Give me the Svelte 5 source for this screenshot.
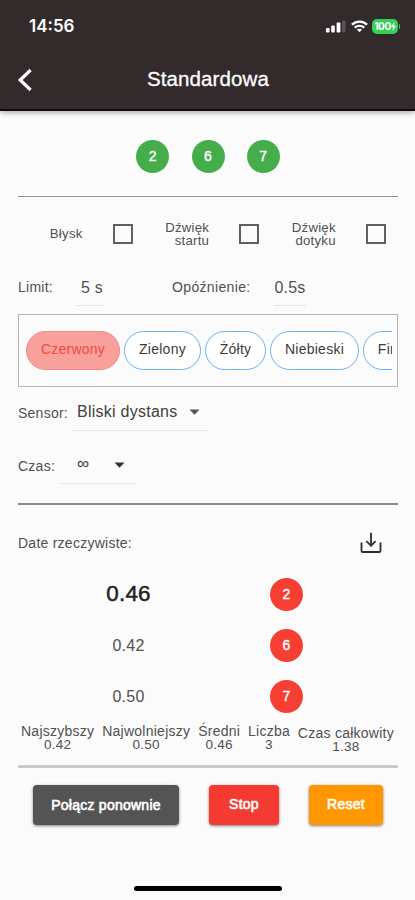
<script>
	let selected = 'Czerwony';

	let flags = [
		{ label: 'Błysk', checked: false },
		{ label: 'Dźwięk startu', checked: false },
		{ label: 'Dźwięk dotyku', checked: false }
	];

	const devices = [2, 6, 7];

	const colors = [
		{ name: 'Czerwony', width: 94 },
		{ name: 'Zielony', width: 77 },
		{ name: 'Żółty', width: 61 },
		{ name: 'Niebieski', width: 89 },
		{ name: 'Firoletowy', width: 96 }
	];

	const results = [
		{ time: '0.46', device: 2 },
		{ time: '0.42', device: 6 },
		{ time: '0.50', device: 7 }
	];

	const stats = [
		{ label: 'Najszybszy', value: '0.42' },
		{ label: 'Najwolniejszy', value: '0.50' },
		{ label: 'Średni', value: '0.46' },
		{ label: 'Liczba', value: '3' },
		{ label: 'Czas całkowity', value: '1.38' }
	];
</script>

<div class="screen">
	<header>
		<div class="status">
			<span class="clock">14:56</span>
			<div class="status-icons">
				<svg class="signal" width="20" height="13" viewBox="0 0 20 13">
					<rect x="0" y="8" width="3.6" height="4.5" rx="1" fill="#fff" />
					<rect x="5.2" y="5.5" width="3.6" height="7" rx="1" fill="#fff" />
					<rect x="10.6" y="2.5" width="3.8" height="10" rx="1" fill="#fff" />
					<rect x="16.2" y="0.5" width="3.2" height="12" rx="1" fill="#5d5657" />
				</svg>
				<svg class="wifi" width="17" height="13" viewBox="0 0 18 13">
					<g fill="none" stroke="#fff" stroke-width="2.5">
						<path d="M1 4.6C5.6.3 12.4.3 17 4.6" />
						<path d="M3.9 7.8C6.9 5.1 11.1 5.1 14.1 7.8" />
					</g>
					<path d="M6.2 9.8C7.8 8.4 10.2 8.4 11.8 9.8L9 12.6z" fill="#fff" />
				</svg>
				<div class="battery">
					<span>100</span>
					<svg width="5" height="9" viewBox="0 0 5 9"><path d="M3.4 0L0 5h2L1.6 9 5 3.8H3z" fill="#fff" /></svg>
				</div>
				<i class="battery-tip"></i>
			</div>
		</div>
		<div class="title-bar">
			<button class="back" aria-label="Wstecz">
				<svg width="16" height="24" viewBox="0 0 16 24">
					<path d="M13.6 2L3.2 12l10.4 10" fill="none" stroke="#fff" stroke-width="3.2" />
				</svg>
			</button>
			<h1>Standardowa</h1>
		</div>
	</header>

	<main>
		<div class="devices">
			{#each devices as device}
				<span class="dot green">{device}</span>
			{/each}
		</div>

		<div class="flags">
			{#each flags as flag}
				<label>
					<span>{flag.label}</span>
					<input type="checkbox" bind:checked={flag.checked} />
				</label>
			{/each}
		</div>

		<div class="numbers">
			<span class="name limit">Limit:</span>
			<span class="field five">5 s</span>
			<span class="name delay">Opóźnienie:</span>
			<span class="field half">0.5s</span>
		</div>

		<div class="colors">
			<div class="scroller">
				{#each colors as color}
					<button
						class="chip"
						class:active={selected === color.name}
						style="width: {color.width}px"
						on:click={() => (selected = color.name)}
					>
						{color.name}
					</button>
				{/each}
			</div>
		</div>

		<div class="row">
			<span class="name">Sensor:</span>
			<div class="select sensor">
				<span>Bliski dystans</span>
				<svg width="11" height="6" viewBox="0 0 10 6"><path d="M0 .5h10L5 5.8z" fill="#555" /></svg>
			</div>
		</div>
		<div class="row time">
			<span class="name">Czas:</span>
			<div class="select duration">
				<span>∞</span>
				<svg width="11" height="6" viewBox="0 0 10 6"><path d="M0 .5h10L5 5.8z" fill="#333" /></svg>
			</div>
		</div>

		<div class="live">
			<span class="name">Date rzeczywiste:</span>
			<svg width="22" height="22" viewBox="0 0 22 22" fill="none" stroke="#2c2c2c" stroke-width="1.8">
				<path d="M1.5 10.5v8.2q0 1.3 1.3 1.3h16.4q1.3 0 1.3-1.3v-8.2" />
				<path d="M11 .8v12.4" />
				<path d="M6.4 9.2l4.6 4.6 4.6-4.6" />
			</svg>
		</div>

		<div class="results">
			{#each results as result, i}
				<div class="result" class:latest={i === 0}>
					<span class="value">{result.time}</span>
					<span class="dot red">{result.device}</span>
				</div>
			{/each}
		</div>

		<div class="stats">
			{#each stats as stat}
				<div class="stat">
					<span>{stat.label}</span>
					<span>{stat.value}</span>
				</div>
			{/each}
		</div>

		<div class="actions">
			<button class="btn reconnect">Połącz ponownie</button>
			<button class="btn stop">Stop</button>
			<button class="btn reset">Reset</button>
		</div>
	</main>

	<footer><i class="home"></i></footer>
</div>

<style>
	:global(body) {
		background: #fbfbfb;
	}
	.screen {
		display: flex;
		flex-direction: column;
		width: 415px;
		height: 900px;
		overflow: hidden;
		background: #fbfbfb;
		color: #505050;
		font-family: 'Liberation Sans', Arial, sans-serif;
		font-size: 14px;
		letter-spacing: 0.25px;
	}
	.screen * {
		box-sizing: border-box;
	}
	button {
		margin: 0;
		padding: 0;
		border: 0;
		font: inherit;
		letter-spacing: inherit;
		white-space: nowrap;
	}
	svg {
		display: block;
		flex: none;
	}

	/* header */
	header {
		flex: none;
		height: 111px;
		background: #322a2b;
		border-bottom: 2px solid #120c0d;
		box-shadow: 0 1px 6px rgba(0, 0, 0, 0.4);
		color: #fff;
	}
	.status {
		display: flex;
		justify-content: space-between;
		align-items: center;
		height: 52px;
		padding: 0 15px 0 29px;
	}
	.clock {
		font-family: Inter, sans-serif;
		font-size: 17px;
		font-weight: 600;
		letter-spacing: 0;
	}
	.status-icons {
		display: flex;
		align-items: center;
	}
	.wifi {
		margin: 0 4px 0 5px;
	}
	.battery {
		display: flex;
		align-items: center;
		justify-content: center;
		width: 26px;
		height: 15px;
		border-radius: 5px;
		background: #34d058;
		font: 700 10px Inter, sans-serif;
		letter-spacing: -0.4px;
	}
	.battery-tip {
		width: 1.5px;
		height: 5px;
		margin-left: 0.5px;
		border-radius: 0 2px 2px 0;
		background: #34d058;
	}
	.title-bar {
		display: grid;
		grid-template-columns: 32px 1fr 32px;
		align-items: center;
		height: 56px;
	}
	.back {
		padding-left: 17px;
		background: none;
	}
	h1 {
		margin: 0;
		padding: 0 0 3px 1px;
		font-size: 20.5px;
		font-weight: 400;
		letter-spacing: 0.1px;
		text-align: center;
		-webkit-text-stroke: 0.3px #fff;
	}

	main {
		display: flex;
		flex-direction: column;
		flex: 1;
		padding: 0 17px 0 18px;
	}
	.dot {
		width: 33px;
		height: 33px;
		border-radius: 50%;
		color: #fff;
		font-size: 14px;
		line-height: 32px;
		text-align: center;
		-webkit-text-stroke: 0.4px #fff;
	}
	.green {
		background: #45ae4b;
	}
	.red {
		background: #f63e32;
	}
	.devices {
		display: flex;
		justify-content: center;
		gap: 22.3px;
		height: 86px;
		padding-top: 29px;
		border-bottom: 1.4px solid #949494;
	}

	/* options */
	.flags {
		display: grid;
		grid-template-columns: repeat(3, 126.6px);
		height: 75px;
		padding-bottom: 2px;
	}
	.flags label {
		display: flex;
		align-items: center;
		justify-content: flex-end;
		gap: 30px;
		padding-right: 12px;
		line-height: 13px;
		text-align: right;
	}
	.flags span {
		width: 50px;
		font-size: 13.2px;
	}
	.flags input {
		appearance: none;
		width: 20px;
		height: 20px;
		margin: 0;
		border: 2px solid #606060;
	}
	.numbers {
		display: flex;
		height: 42px;
		padding-top: 6px;
	}
	.name {
		line-height: 18px;
	}
	.limit {
		width: 58px;
	}
	.field {
		height: 28px;
		border-bottom: 1px solid #e4e4e4;
		font-size: 16px;
		line-height: 19px;
		text-align: center;
	}
	.five {
		width: 28px;
		margin-right: 68px;
		padding-left: 4px;
		white-space: nowrap;
	}
	.delay {
		width: 102px;
		letter-spacing: 0.35px;
	}
	.half {
		width: 32px;
	}
	.colors {
		flex: none;
		height: 73px;
		padding: 16px 5px 0 7px;
		border: 1px solid #b2b2b2;
	}
	.scroller {
		display: flex;
		gap: 4px;
		overflow: hidden;
	}
	.chip {
		flex: none;
		height: 39px;
		padding-bottom: 3px;
		border: 1.8px solid #6fb1f2;
		border-radius: 20px;
		background: #fff;
		color: #3c3c3c;
		line-height: 34px;
	}
	.chip.active {
		border-color: #f08a86;
		background: #f8a09b;
		color: #f34a40;
	}
	.row {
		display: flex;
		padding-top: 16px;
		height: 54px;
	}
	.row .name {
		line-height: 20px;
	}
	.select {
		display: flex;
		align-items: center;
		height: 28px;
		padding-bottom: 9px;
		border-bottom: 1px solid #e8e8e8;
		font-size: 16px;
		color: #404040;
	}
	.sensor {
		width: 136px;
		margin-left: 4px;
		padding-left: 5px;
		gap: 12px;
	}
	.duration {
		width: 75px;
		margin-left: 5px;
		padding-left: 17px;
		gap: 25px;
	}
	.time {
		height: 64px;
		padding-top: 15px;
		border-bottom: 2px solid #8c8c8c;
	}
	.duration span {
		padding-bottom: 2px;
		font-size: 17px;
	}

	/* live data */
	.live {
		display: flex;
		justify-content: space-between;
		align-items: center;
		height: 76px;
		padding-right: 16px;
	}
	.live .name {
		padding-bottom: 1px;
	}
	.results {
		display: grid;
		grid-auto-rows: 33px;
		gap: 18px;
		height: 141px;
		margin-top: -3px;
	}
	.result {
		display: grid;
		grid-template-columns: 221px 33px;
		align-items: center;
		margin-left: 31px;
	}
	.value {
		width: 159px;
		font-size: 16px;
		text-align: center;
	}
	.latest .value {
		padding-bottom: 2px;
		color: #222;
		font-size: 22.4px;
		-webkit-text-stroke: 0.5px #222;
	}
	.stats {
		display: flex;
		justify-content: space-between;
		height: 49px;
		padding: 5px 4px 0 3px;
		border-bottom: 3px solid #cbcbcb;
		line-height: 14px;
		white-space: nowrap;
	}
	.stat {
		display: flex;
		flex-direction: column;
		align-items: center;
	}
	.stat span + span {
		font-size: 13.5px;
	}
	.stat:last-child {
		padding-top: 2px;
	}
	.actions {
		display: flex;
		gap: 30px;
		padding: 17px 0 0 15px;
	}
	.btn {
		height: 40px;
		padding-bottom: 1px;
		border-radius: 4px;
		box-shadow: 0 1px 3px rgba(0, 0, 0, 0.5);
		color: #fff;
		-webkit-text-stroke: 0.6px #fff;
	}
	.reconnect {
		width: 146px;
		background: #545454;
	}
	.stop {
		width: 70px;
		padding-bottom: 3px;
		background: #f53b31;
	}
	.reset {
		width: 74px;
		padding-bottom: 3px;
		background: #ff9800;
	}
	footer {
		display: flex;
		justify-content: center;
		flex: none;
		height: 14px;
	}
	.home {
		width: 148px;
		height: 5px;
		border-radius: 3px;
		background: #000;
	}
</style>
